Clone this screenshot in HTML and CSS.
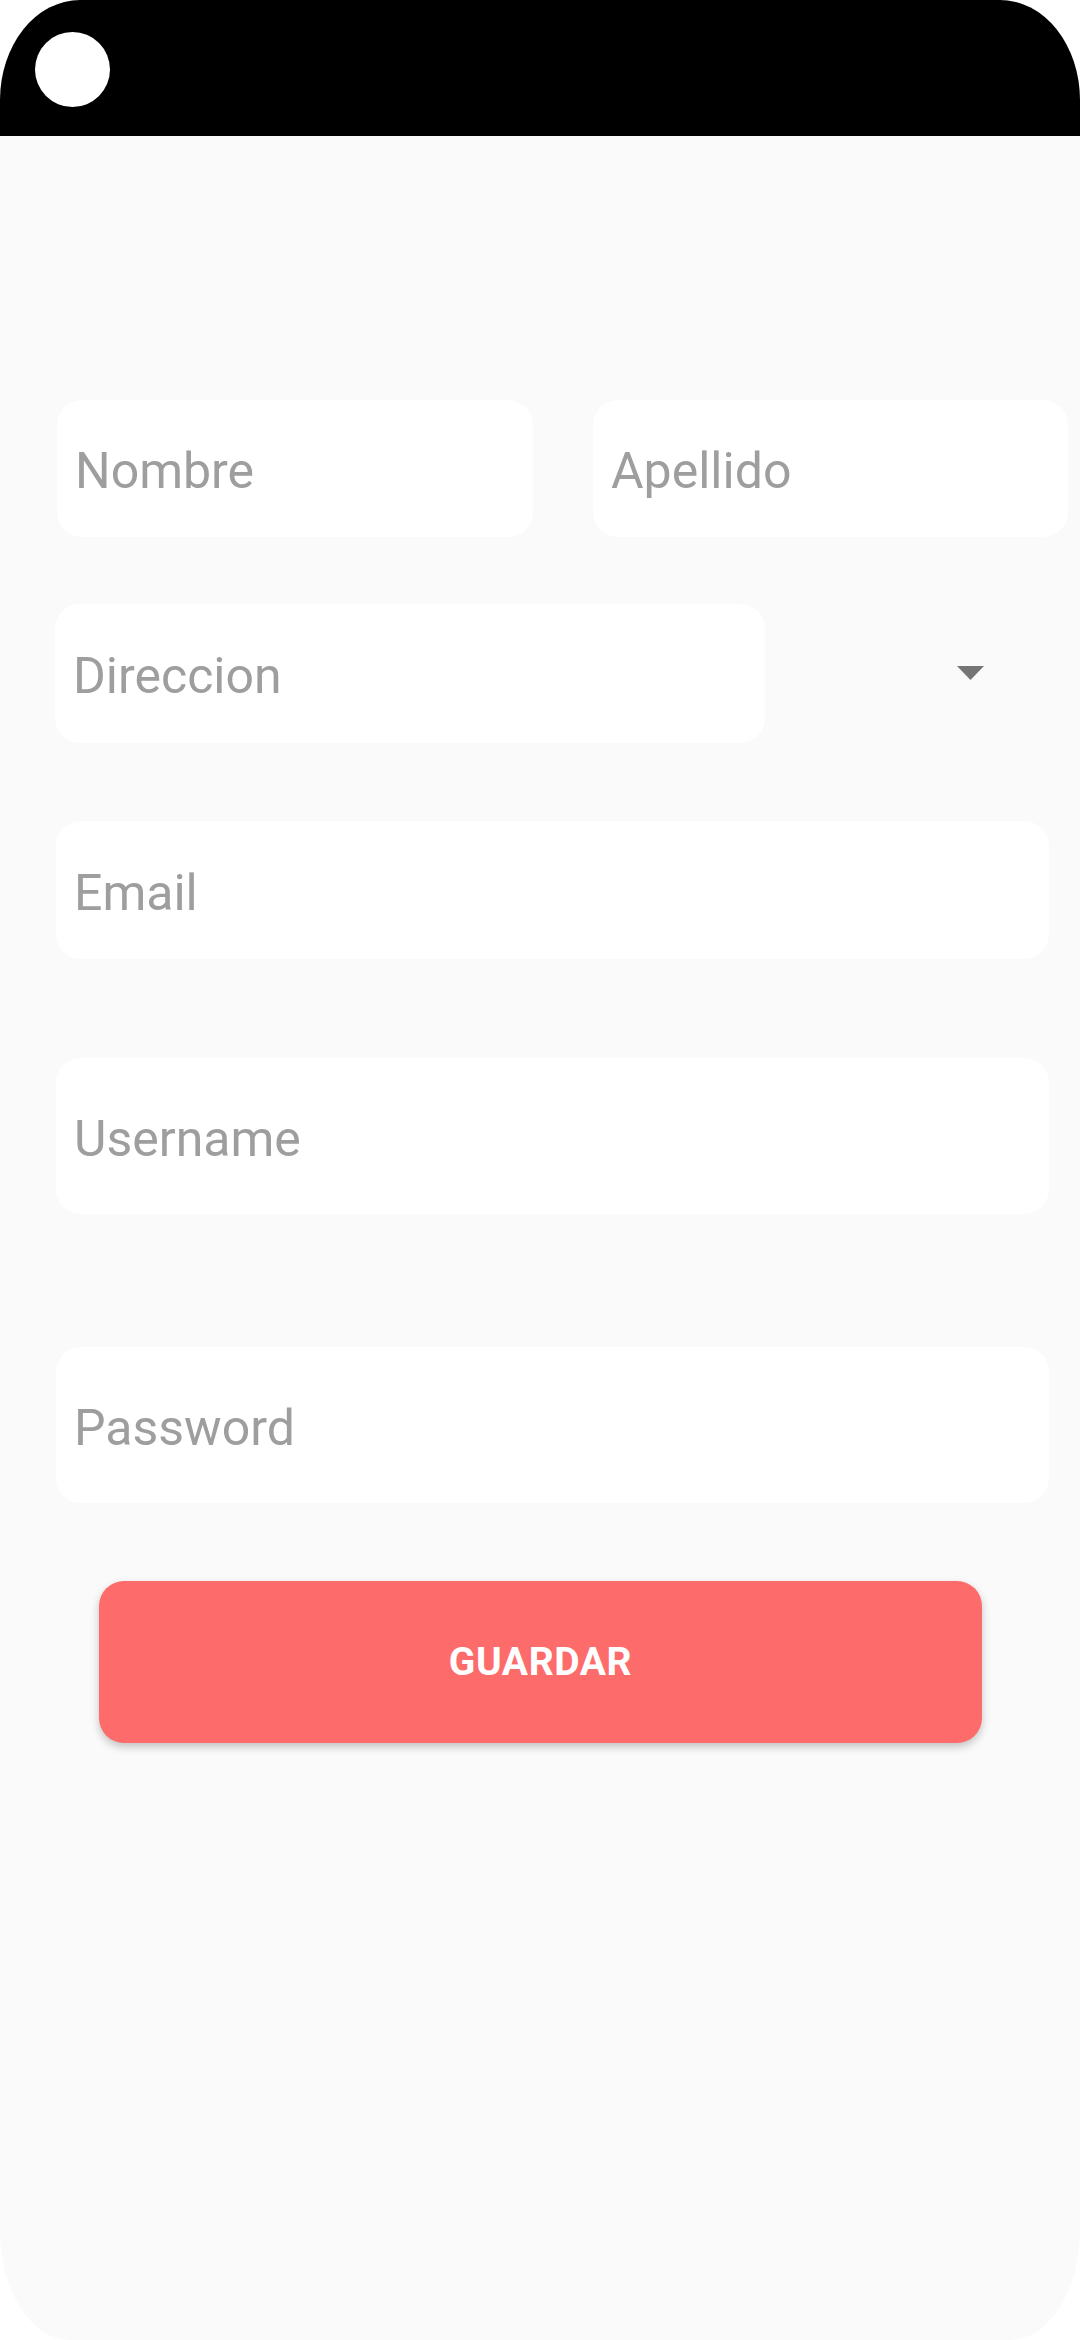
FILE: index.html
```html
<!DOCTYPE html>
<html lang="es">
<head>
<meta charset="utf-8">
<title>Registro</title>
<link rel="stylesheet" href="styles.css">
</head>
<body>
<div class="phone">
  <div class="statusbar"><span class="camera"></span></div>
  <main class="form">
    <div class="row row-names">
      <div class="field field-nombre"><span class="hint">Nombre</span></div>
      <div class="field field-apellido"><span class="hint">Apellido</span></div>
    </div>
    <div class="row row-dir">
      <div class="field field-dir"><span class="hint">Direccion</span></div>
      <div class="spinner"><svg class="arrow" width="27" height="14" viewBox="0 0 27 14"><polygon points="0,0 27,0 13.5,14" fill="#757575"/></svg></div>
    </div>
    <div class="field field-wide field-email"><span class="hint">Email</span></div>
    <div class="field field-wide field-tall field-user"><span class="hint">Username</span></div>
    <div class="field field-wide field-tall field-pass"><span class="hint">Password</span></div>
    <button class="btn">GUARDAR</button>
  </main>
</div>
</body>
</html>
```

FILE: styles.css
```css
html, body {
  margin: 0;
  padding: 0;
  background: #ffffff;
}
.phone {
  width: 1080px;
  height: 2340px;
  background: #fafafa;
  border-radius: 80px 80px 70px 70px / 100px 100px 110px 110px;
  overflow: hidden;
  font-family: Roboto, "Noto Sans", sans-serif;
}
.statusbar {
  height: 136px;
  background: #000;
  padding: 32px 0 0 35px;
  box-sizing: border-box;
}
.camera {
  display: block;
  width: 75px;
  height: 75px;
  border-radius: 50%;
  background: #fff;
}
.form {
  display: flex;
  flex-direction: column;
  padding-top: 264px;
}
.row {
  display: flex;
}
.field {
  background: #fff;
  border-radius: 25px;
  display: flex;
  align-items: center;
  padding-left: 18px;
  padding-top: 5px;
  box-sizing: border-box;
}
.hint {
  font-size: 50px;
  color: #9e9e9e;
  line-height: 1;
}
.row-names {
  padding-left: 57px;
  gap: 60px;
}
.field-nombre {
  width: 476px;
  height: 137px;
}
.field-apellido {
  width: 475px;
  height: 137px;
}
.row-dir {
  margin-top: 67px;
  padding-left: 55px;
}
.field-dir {
  width: 710px;
  height: 139px;
  padding-left: 18px;
}
.spinner {
  flex: 1;
  display: flex;
  align-items: center;
  padding-left: 192px;
  padding-bottom: 1px;
}
.arrow {
  display: block;
}
.field-wide {
  margin-left: 56px;
  width: 993px;
}
.field-email {
  margin-top: 78px;
  height: 138px;
}
.field-tall {
  height: 156px;
}
.field-user {
  margin-top: 99px;
}
.field-pass {
  margin-top: 133px;
}
.btn {
  margin: 78px 0 0 99px;
  width: 883px;
  height: 162px;
  border: none;
  border-radius: 25px;
  background: #fd6c6a;
  color: #fff;
  font-family: Roboto, "Noto Sans", sans-serif;
  font-weight: 700;
  font-size: 39px;
  letter-spacing: 0.6px;
  box-shadow: 0 4px 8px rgba(0, 0, 0, 0.22);
  padding: 0;
}
```
